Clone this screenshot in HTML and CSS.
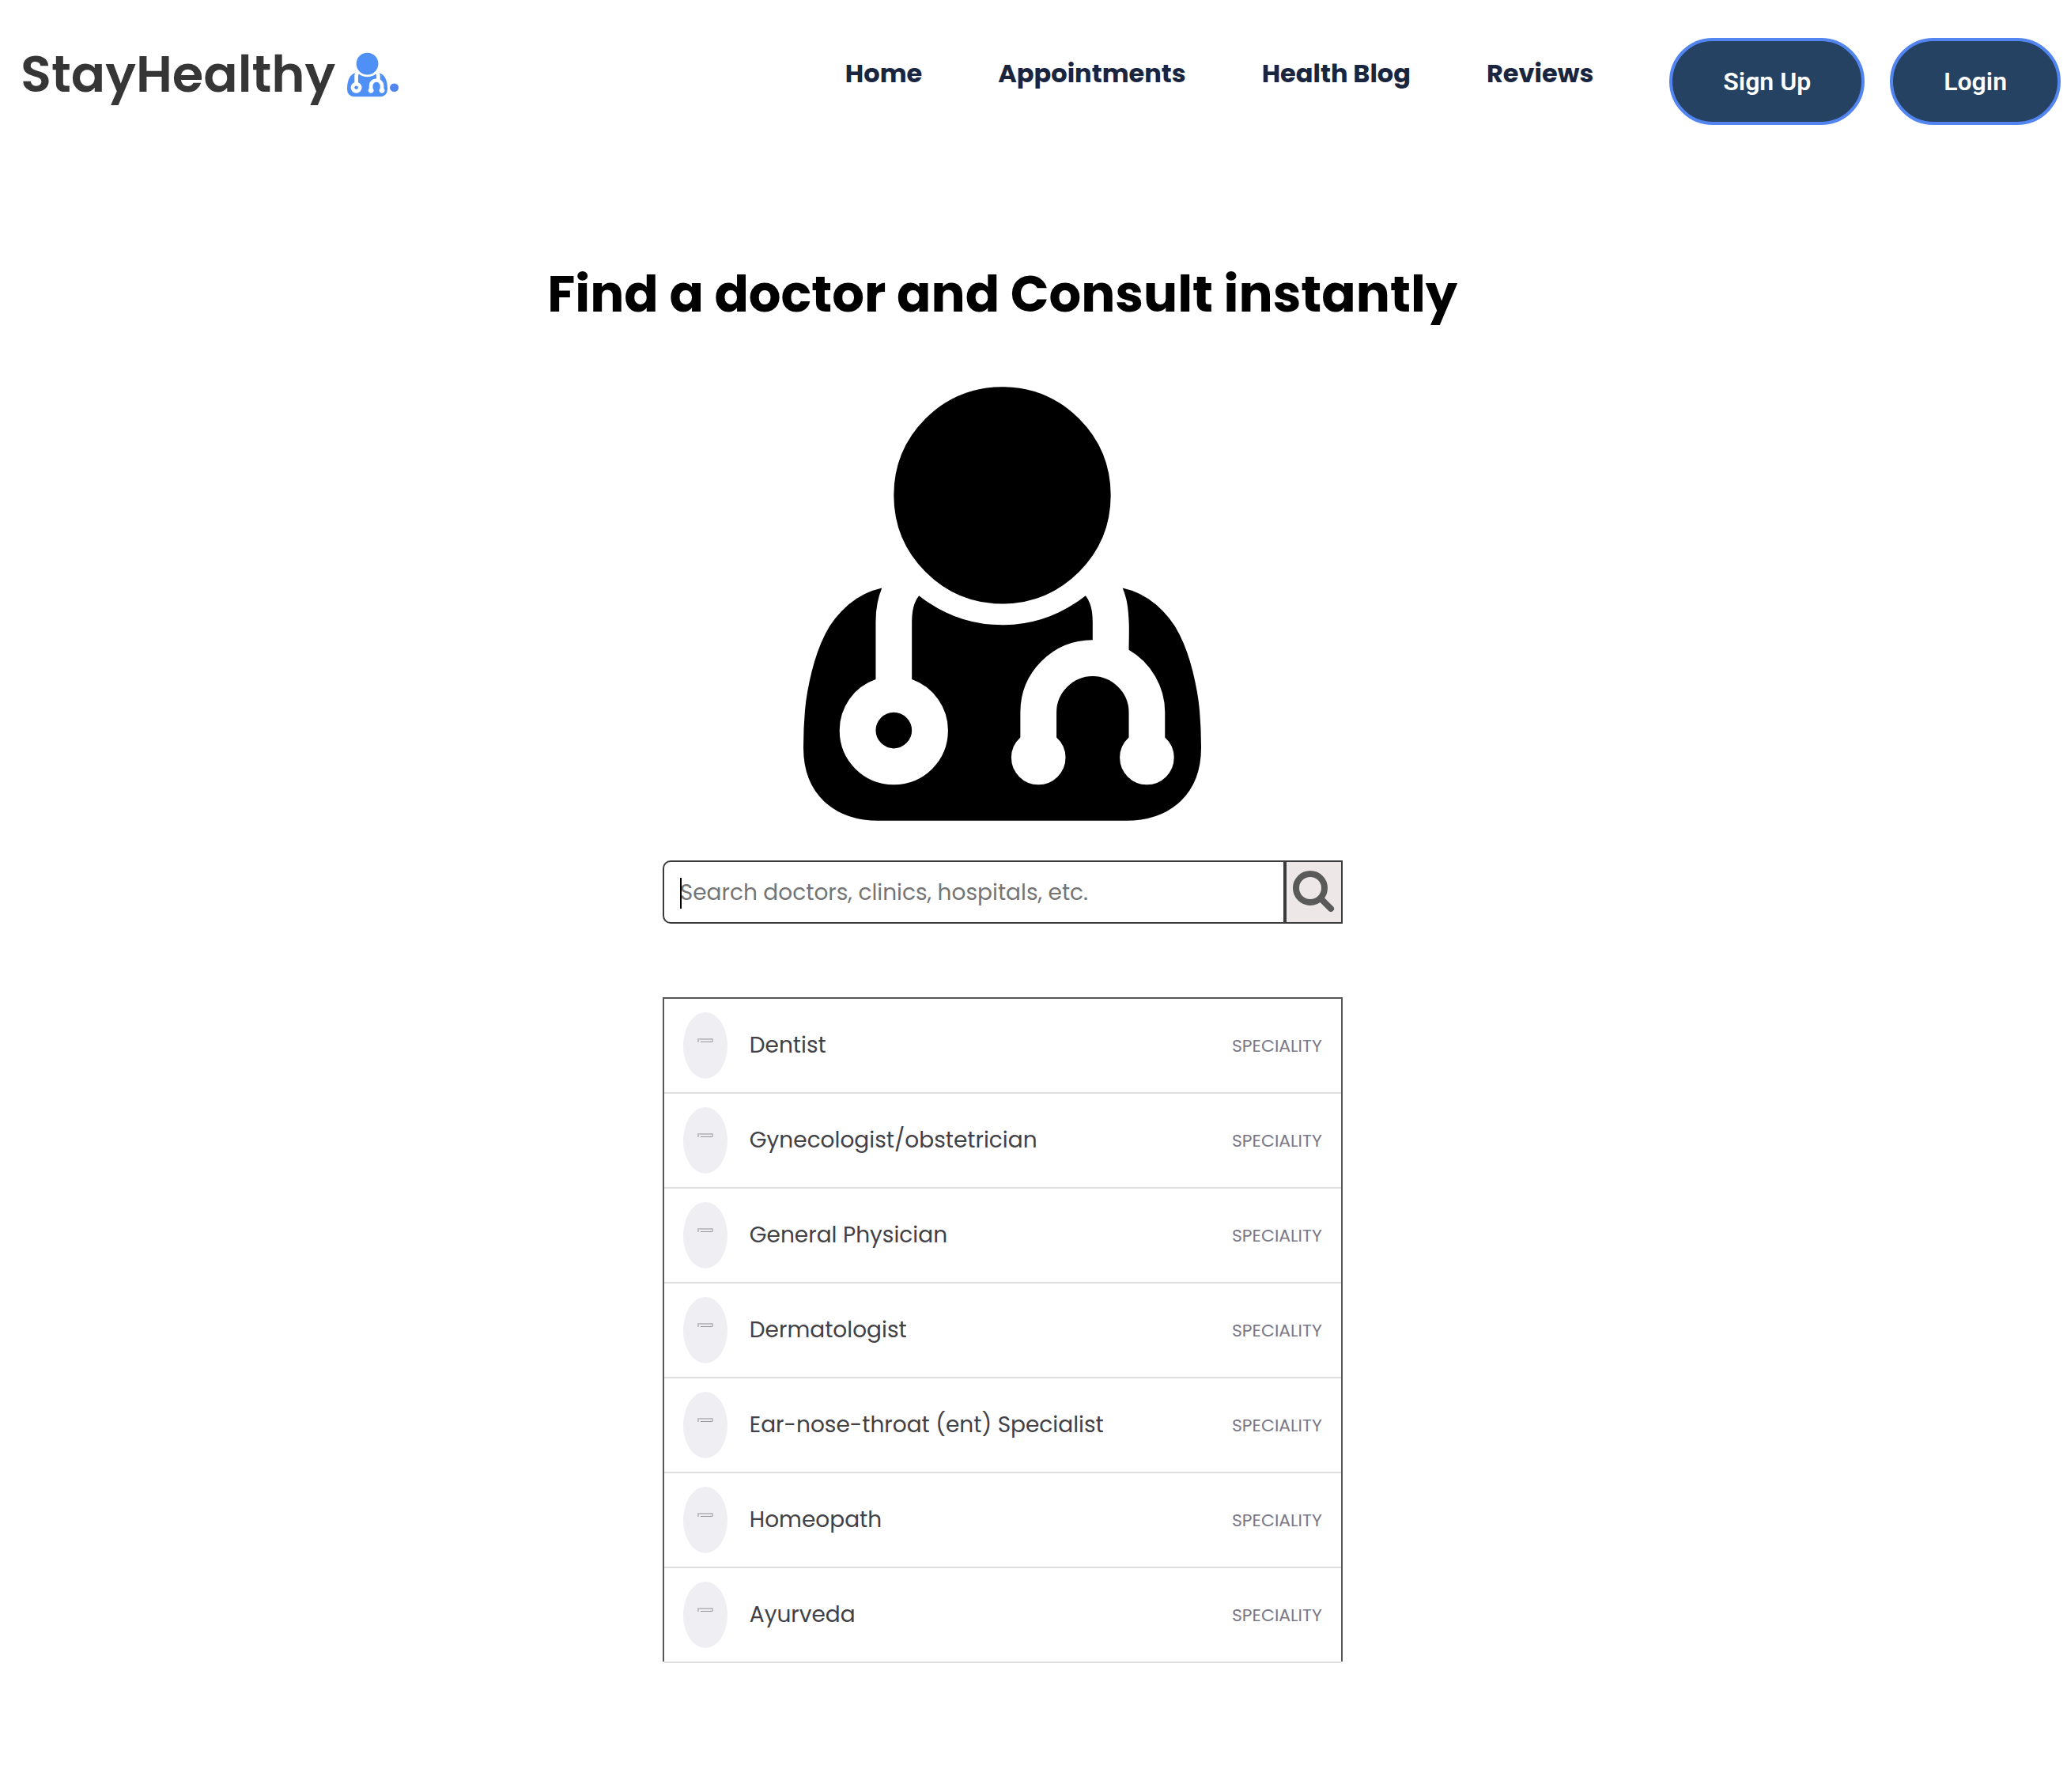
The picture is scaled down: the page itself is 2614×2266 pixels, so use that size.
FILE: index.html
```html
<!DOCTYPE html>
<html lang="en">
<head>
<meta charset="utf-8">
<meta name="viewport" content="width=device-width, initial-scale=1">
<title>StayHealthy</title>
<link rel="stylesheet" href="styles.css">
</head>
<body>
<svg class="defs" aria-hidden="true">
  <symbol id="doctor" viewBox="0 128 1408 1536"><path d="M384 1344q0 26-19 45t-45 19-45-19-19-45 19-45 45-19 45 19 19 45zm1024 61q0 121-73 190t-194 69h-874q-121 0-194-69t-73-190q0-68 5.500-131t24-138 47.500-132.500 81-103 120-60.500q-22 52-22 120v203q-58 20-93 70t-35 111q0 80 56 136t136 56 136-56 56-136q0-61-35.500-111t-92.500-70v-203q0-62 25-93 132 104 295 104t295-104q25 31 25 93v64q-106 0-181 75t-75 181v89q-32 29-32 71 0 40 28 68t68 28 68-28 28-68q0-42-32-71v-89q0-52 38-90t90-38 90 38 38 90v89q-32 29-32 71 0 40 28 68t68 28 68-28 28-68q0-42-32-71v-89q0-68-34.500-127.500t-93.500-93.500q0-10 .5-42.500t0-48-2.500-41.500-7-47-13-40q68 15 120 60.500t81 103 47.500 132.500 24 138 5.500 131zm-320-893q0 159-112.500 271.500t-271.500 112.500-271.500-112.500-112.500-271.500 112.500-271.500 271.500-112.500 271.500 112.500 112.500 271.500z"/></symbol>
  <symbol id="broken" viewBox="0 0 20 5"><path d="M0 0h20v5h-2V2H2v3H0z" fill="#c0c0c0"/><path d="M4 4h14v1H4z" fill="#979797"/></symbol>
</svg>
<header class="navbar">
  <a class="logo" href="#">StayHealthy<svg class="logo-icon" aria-hidden="true"><use href="#doctor"/></svg><span class="logo-dot">.</span></a>
  <nav class="menu">
    <a class="menu-link" href="#">Home</a>
    <a class="menu-link" href="#">Appointments</a>
    <a class="menu-link" href="#">Health Blog</a>
    <a class="menu-link" href="#">Reviews</a>
    <div class="actions">
      <button class="btn" type="button">Sign Up</button>
      <button class="btn" type="button">Login</button>
    </div>
  </nav>
</header>
<main class="finder">
  <h1 class="title">Find a doctor and Consult instantly</h1>
  <svg class="hero-icon" aria-hidden="true"><use href="#doctor"/></svg>
  <form class="search">
    <div class="field">
      <input class="search-input" type="text" aria-label="Search doctors" placeholder="Search doctors, clinics, hospitals, etc.">
      <span class="caret"></span>
    </div>
    <button class="search-button" type="button" aria-label="Search"><svg class="search-icon" viewBox="0 0 56 56" aria-hidden="true"><circle cx="24" cy="23" r="18"/><path d="M37 36l13 13"/></svg></button>
  </form>
  <ul class="results">
    <li class="result"><span class="avatar"><svg class="broken"><use href="#broken"/></svg></span><span class="name">Dentist</span><span class="kind">SPECIALITY</span></li>
    <li class="result"><span class="avatar"><svg class="broken"><use href="#broken"/></svg></span><span class="name">Gynecologist/obstetrician</span><span class="kind">SPECIALITY</span></li>
    <li class="result"><span class="avatar"><svg class="broken"><use href="#broken"/></svg></span><span class="name">General Physician</span><span class="kind">SPECIALITY</span></li>
    <li class="result"><span class="avatar"><svg class="broken"><use href="#broken"/></svg></span><span class="name">Dermatologist</span><span class="kind">SPECIALITY</span></li>
    <li class="result"><span class="avatar"><svg class="broken"><use href="#broken"/></svg></span><span class="name">Ear-nose-throat (ent) Specialist</span><span class="kind">SPECIALITY</span></li>
    <li class="result"><span class="avatar"><svg class="broken"><use href="#broken"/></svg></span><span class="name">Homeopath</span><span class="kind">SPECIALITY</span></li>
    <li class="result"><span class="avatar"><svg class="broken"><use href="#broken"/></svg></span><span class="name">Ayurveda</span><span class="kind">SPECIALITY</span></li>
  </ul>
</main>
</body>
</html>
```
FILE: styles.css
```css
* {
  box-sizing: border-box;
}

body {
  margin: 0;
  background: #fff;
  font-family: Poppins, Inter, sans-serif;
}

.defs {
  display: none;
}

.navbar {
  display: flex;
  justify-content: space-between;
  align-items: flex-start;
  padding: 48px 8px 0 26px;
}

.logo {
  display: flex;
  align-items: center;
  color: #363636;
  font-size: 64px;
  font-weight: 600;
  line-height: 92px;
  text-decoration: none;
}

.logo-icon {
  width: 51px;
  height: 57px;
  margin-left: 15px;
  fill: #4f90f7;
}

.logo-dot {
  color: #5285f0;
}

.menu {
  display: flex;
  gap: 96px;
}

.menu-link {
  color: #1a2640;
  font-size: 32px;
  font-weight: 700;
  line-height: 90px;
  text-decoration: none;
}

.actions {
  display: flex;
  gap: 32px;
}

.btn {
  height: 110px;
  padding: 0 64px;
  border: 4px solid #5285f0;
  border-radius: 55px;
  background: #254263;
  color: #fff;
  font-family: Roboto, sans-serif;
  font-size: 32px;
  font-weight: 600;
}

.finder {
  display: flex;
  flex-direction: column;
  align-items: center;
  margin-right: 3%;
  padding: 164px 0;
}

.title {
  margin: 0;
  color: #000;
  font-size: 64px;
  font-weight: 700;
  line-height: 100px;
}

.hero-icon {
  width: 503px;
  height: 549px;
  margin: 67px 0 50px;
}

.search {
  display: flex;
  width: 100%;
  max-width: 860px;
  height: 80px;
}

.field {
  position: relative;
  flex: 1;
}

.search-input {
  width: 100%;
  height: 100%;
  padding: 2px 20px 0;
  border: 2px solid #3b3b3d;
  border-radius: 10px 0 0 10px;
  background: #fff;
  font: 400 28px Poppins, Inter, sans-serif;
}

.search-input::placeholder {
  color: #757575;
  opacity: 1;
}

.caret {
  position: absolute;
  left: 22px;
  top: 22px;
  width: 2px;
  height: 39px;
  background: #000;
}

.search-button {
  display: flex;
  align-items: center;
  justify-content: center;
  width: 73px;
  padding: 0;
  border: 2px solid #3b3b3d;
  background: #ede8e7;
}

.search-icon {
  width: 56px;
  height: 56px;
  fill: none;
  stroke: #595a59;
  stroke-width: 8;
  stroke-linecap: round;
}

.results {
  width: 100%;
  max-width: 860px;
  margin: 93px 0 0;
  padding: 0;
  border: 2px solid #555658;
  border-bottom: 0;
  list-style: none;
}

.result {
  display: flex;
  align-items: center;
  height: 120px;
  padding: 0 24px;
  border-bottom: 2px solid #dedede;
}

.result:last-child {
  margin-bottom: -2px;
}

.avatar {
  display: flex;
  justify-content: center;
  width: 56px;
  height: 84px;
  padding-top: 33px;
  border-radius: 50%;
  background: #efeef3;
}

.broken {
  width: 20px;
  height: 5px;
}

.name {
  flex: 1;
  margin-left: 28px;
  color: #414146;
  font-size: 28px;
}

.kind {
  color: #787887;
  font-size: 22px;
}
```
